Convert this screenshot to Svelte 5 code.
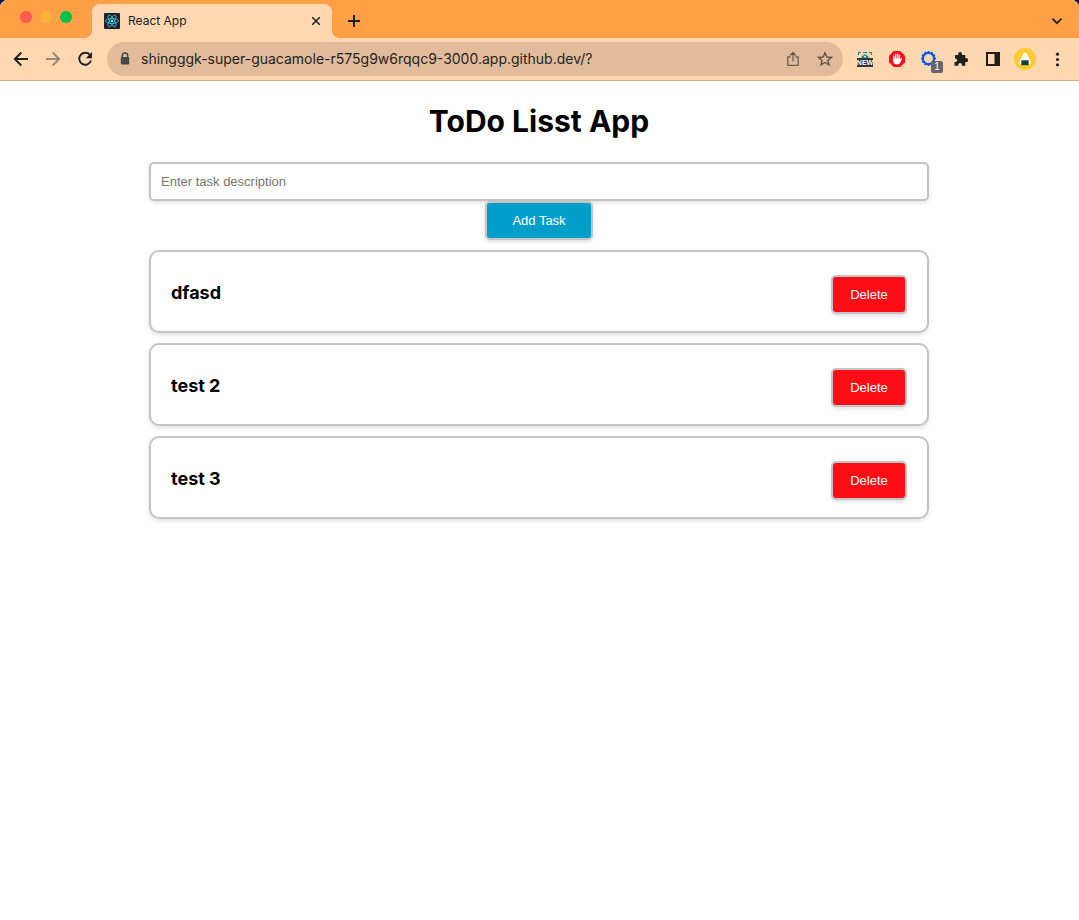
<script>
  let tasks = $state(['dfasd', 'test 2', 'test 3']);
  let draft = $state('');
  let address = $state('shingggk-super-guacamole-r575g9w6rqqc9-3000.app.github.dev/?');

  function addTask(event) {
    event.preventDefault();
    if (!draft.trim()) return;
    tasks.push(draft.trim());
    draft = '';
  }

  function removeTask(index) {
    tasks.splice(index, 1);
  }

  const teeth = Array.from({ length: 12 }, (_, i) => i * 30);
</script>

<div class="window">
  <header>
    <div class="tabs">
      <div class="lights">
        <span class="light close"></span>
        <span class="light minimise"></span>
        <span class="light zoom"></span>
      </div>
      <div class="tab">
        <svg class="favicon" width="16" height="16" viewBox="0 0 16 16" aria-hidden="true">
          <rect width="16" height="16" rx="1" fill="#20232a" />
          <g fill="none" stroke="#3fc1dc" stroke-width=".8">
            <ellipse cx="8" cy="8" rx="6.6" ry="2.5" />
            <ellipse cx="8" cy="8" rx="6.6" ry="2.5" transform="rotate(60 8 8)" />
            <ellipse cx="8" cy="8" rx="6.6" ry="2.5" transform="rotate(120 8 8)" />
          </g>
          <circle cx="8" cy="8" r="1.4" fill="#61dafb" />
        </svg>
        <span class="title">React App</span>
        <button class="icon" aria-label="Close tab">
          <svg width="16" height="16" viewBox="0 0 16 16"><path d="M4.200 4.200l7.600 7.600M11.800 4.200l-7.600 7.600" fill="none" stroke="#1f1f1f" stroke-width="1.500" /></svg>
        </button>
      </div>
      <button class="icon new-tab" aria-label="New tab">
        <svg width="16" height="16" viewBox="0 0 16 16"><path d="M8 2v12M2 8h12" fill="none" stroke="#1f1f1f" stroke-width="2" /></svg>
      </button>
      <button class="icon search" aria-label="Search tabs">
        <svg width="16" height="16" viewBox="0 0 16 16"><path d="M3.500 5.700L8 10.200l4.500-4.500" fill="none" stroke="#1f1f1f" stroke-width="1.700" /></svg>
      </button>
    </div>

    <div class="toolbar">
      <nav>
        <button class="icon" aria-label="Back">
          <svg width="16" height="16" viewBox="0 0 16 16"><path d="M15 8H2M8.300 1.500L1.800 8l6.500 6.500" fill="none" stroke="#1f1f1f" stroke-width="1.900" /></svg>
        </button>
        <button class="icon" aria-label="Forward">
          <svg width="16" height="16" viewBox="0 0 16 16"><path d="M1 8h13M7.700 1.500L14.200 8l-6.500 6.500" fill="none" stroke="#9d8671" stroke-width="1.900" /></svg>
        </button>
        <button class="icon" aria-label="Reload">
          <svg width="16" height="16" viewBox="0 0 16 16"><path d="M13.200 4.300A6 6 0 1 0 14 9.500" fill="none" stroke="#1f1f1f" stroke-width="1.900" /><path d="M15 1v6.200H8.800z" fill="#1f1f1f" /></svg>
        </button>
      </nav>

      <div class="address">
        <svg width="16" height="16" viewBox="0 0 16 16" aria-hidden="true"><path d="M5.300 7V4.700a2.700 2.700 0 0 1 5.400 0V7" fill="none" stroke="#46474a" stroke-width="1.400" /><rect x="3.800" y="6" width="8.400" height="7.500" rx="1" fill="#46474a" /></svg>
        <input aria-label="Address" spellcheck="false" bind:value={address} />
        <button class="icon" aria-label="Share">
          <svg width="16" height="16" viewBox="0 0 16 16"><path d="M5.500 6H2.800v8.300h10.400V6h-2.700M8 10.500V1.700M5 4.500l3-3 3 3" fill="none" stroke="#6b5e52" stroke-width="1.300" /></svg>
        </button>
        <button class="icon" aria-label="Bookmark">
          <svg width="16" height="16" viewBox="0 0 16 16"><path d="M8 1.800l1.800 4.200 4.600.4-3.500 3 1.100 4.500L8 11.500l-4 2.400 1.100-4.500-3.500-3 4.600-.4z" fill="none" stroke="#5e5349" stroke-width="1.400" /></svg>
        </button>
      </div>

      <div class="extensions">
        <button class="icon" aria-label="Capture">
          <svg width="16" height="16" viewBox="0 0 16 16">
            <path d="M1.500 4V1.500H4M6 1.500h4M12 1.500h2.500V4" fill="none" stroke="#168c94" stroke-width="1.200" />
            <path d="M4.500 7V5.500L6 4.500l1-1h2l1 1 1.500 1V7z" fill="#168c94" /><circle cx="8" cy="5.800" r="1" fill="#ffd8b1" />
            <rect y="7" width="16" height="9" fill="#333" />
            <text x="8" y="14" text-anchor="middle" font-size="7" font-weight="700" fill="#fff">NEW</text>
          </svg>
        </button>
        <button class="icon" aria-label="Content blocker">
          <svg width="16" height="16" viewBox="0 0 16 16">
            <path d="M4.700 0h6.600L16 4.700v6.600L11.300 16H4.700L0 11.300V4.700z" fill="#fb0d1b" />
            <path d="M4.800 9V4.800M6.700 8V3.400M8.600 8V3M10.500 9V4.200" stroke="#fff" stroke-width="1.300" stroke-linecap="round" />
            <path d="M4.200 7.400h6.900v1.400l1-1.300c.5-.6 1.300-.2 1 .6l-2.200 4c-.6 1-1.400 1.300-2.700 1.300-2.500 0-4-1.200-4-4z" fill="#fff" />
          </svg>
        </button>
        <button class="icon badged" aria-label="Gear extension, 1 notice">
          <svg width="16" height="16" viewBox="0 0 16 16">
            <circle cx="7.500" cy="7.500" r="5.600" fill="none" stroke="#0b57f0" stroke-width="2.200" />
            {#each teeth as angle}
              <rect x="6.600" y="0" width="1.800" height="2.200" fill="#0b57f0" transform={`rotate(${angle} 7.500 7.500)`} />
            {/each}
          </svg>
          <span class="badge">1</span>
        </button>
        <button class="icon" aria-label="Extensions">
          <svg width="16" height="16" viewBox="0 0 16 16"><path d="M2 4h3.200V2.800a1.900 1.900 0 0 1 3.800 0V4h3.300v3.300h1a1.900 1.900 0 0 1 0 3.800h-1v3.700H8.900v-.9a1.800 1.800 0 0 0-3.600 0v.9H1.500v-3.700h.9a1.800 1.800 0 0 0 0-3.600H2z" fill="#1f1f1f" /></svg>
        </button>
        <button class="icon" aria-label="Side panel">
          <svg width="16" height="16" viewBox="0 0 16 16"><path d="M1 1h14v14H1zM3 3v10h6.500V3z" fill="#1f1f1f" fill-rule="evenodd" /></svg>
        </button>
        <button class="icon profile" aria-label="Profile">
          <svg width="22" height="22" viewBox="0 0 22 22">
            <circle cx="11" cy="11" r="11" fill="#fdcb2f" />
            <path d="M9.500 5.300q1.500-1.500 3 0l4 8.200q.8 2.500-1.500 3H7q-2.300-.5-1.500-3z" fill="#fff" />
            <path d="M7.300 12.300h7.400v5H7.300z" fill="#064a3f" />
          </svg>
        </button>
        <button class="icon" aria-label="Menu">
          <svg width="16" height="16" viewBox="0 0 16 16" fill="#1f1f1f"><circle cx="8.500" cy="3.200" r="1.600" /><circle cx="8.500" cy="8.500" r="1.600" /><circle cx="8.500" cy="13.800" r="1.600" /></svg>
        </button>
      </div>
    </div>
  </header>

  <main>
    <h1>ToDo Lisst App</h1>
    <form onsubmit={addTask}>
      <input aria-label="Task description" placeholder="Enter task description" bind:value={draft} />
      <button class="action add">Add Task</button>
    </form>
    <ul>
      {#each tasks as task, index}
        <li>
          <h3>{task}</h3>
          <button class="action delete" onclick={() => removeTask(index)}>Delete</button>
        </li>
      {/each}
    </ul>
  </main>
</div>

<style>
  :global(body) {
    background: #00145a;
  }

  .window {
    min-height: 100vh;
    overflow: hidden;
    border-radius: 8px 8px 0 0;
    background: #fff;
    font-family: Inter, "Liberation Sans", sans-serif;
    color: #000;
  }

  .window * {
    box-sizing: border-box;
  }

  svg {
    display: block;
    flex: none;
  }

  .icon {
    display: grid;
    place-items: center;
    flex: none;
    width: 16px;
    height: 24px;
    padding: 0;
    border: 0;
    background: none;
  }

  header {
    border-bottom: 1px solid #d0aa8b;
    background: #ffd8b1;
  }

  .tabs {
    display: flex;
    height: 38px;
    background: #ffa047;
  }

  .lights {
    display: flex;
    gap: 8px;
    width: 92px;
    padding: 11px 20px;
  }

  .light {
    width: 12px;
    height: 12px;
    border-radius: 50%;
  }

  .close {
    background: #ff5a52;
  }

  .minimise {
    background: #ffb13c;
  }

  .zoom {
    background: #00c148;
  }

  .tab {
    position: relative;
    display: flex;
    align-items: center;
    gap: 8px;
    width: 240px;
    height: 34px;
    margin-top: 4px;
    padding: 0 8px 0 12px;
    border-radius: 8px 8px 0 0;
    background: #ffd8b1;
  }

  .tab::before,
  .tab::after {
    content: "";
    position: absolute;
    bottom: 0;
    width: 8px;
    height: 8px;
  }

  .tab::before {
    right: 100%;
    background: radial-gradient(circle at 0 0, transparent 8px, #ffd8b1 8px);
  }

  .tab::after {
    left: 100%;
    background: radial-gradient(circle at 100% 0, transparent 8px, #ffd8b1 8px);
  }

  .title {
    flex: 1;
    font-size: 12px;
    line-height: 16px;
    color: #1f1f1f;
  }

  .new-tab {
    margin: 9px 14px;
  }

  .search {
    margin: 9px 14px 0 auto;
  }

  .toolbar {
    display: flex;
    align-items: center;
    height: 42px;
    padding: 0 14px 0 13px;
  }

  nav {
    display: flex;
    gap: 16px;
    margin-right: 14px;
  }

  .address {
    display: flex;
    flex: 1;
    align-items: center;
    gap: 16px;
    height: 34px;
    min-width: 0;
    padding: 0 10px;
    border-radius: 17px;
    background: #e2bc9a;
  }

  .address input {
    flex: 1;
    min-width: 0;
    margin-left: -8px;
    padding: 0;
    border: 0;
    outline: 0;
    background: none;
    font: 14px/20px Inter, "Liberation Sans", sans-serif;
    color: #1f1f1f;
  }

  .extensions {
    display: flex;
    gap: 16px;
    margin-left: 14px;
  }

  .extensions text {
    font-family: "Liberation Sans", sans-serif;
  }

  .badged {
    position: relative;
  }

  .badge {
    position: absolute;
    top: 14px;
    left: 10px;
    width: 12px;
    height: 12px;
    border-radius: 2px;
    background: #666;
    font-size: 10px;
    line-height: 12px;
    text-align: center;
    color: #fff;
  }

  .profile svg {
    margin: 0 -3px;
  }

  main {
    max-width: 781px;
    margin: 0 auto;
    padding: 21px 1px 21px 0;
  }

  h1 {
    margin: 0 0 21px;
    font-size: 30px;
    font-weight: 700;
    line-height: 39px;
    text-align: center;
  }

  form {
    display: flex;
    flex-direction: column;
    align-items: center;
  }

  form input,
  .action {
    height: 39px;
    border: 2px solid #c4c4c4;
    border-radius: 5px;
    box-shadow: 0 2px 4px rgba(0, 0, 0, 0.12);
    font: 13px/15px "Liberation Sans", sans-serif;
  }

  form input {
    width: 100%;
    padding: 0 10px;
    background: #fff;
  }

  form input::placeholder {
    color: #757575;
  }

  .action {
    padding: 0;
    color: #fff;
  }

  .add {
    width: 108px;
    background: #009fc9;
  }

  .delete {
    width: 76px;
    background: #ff0d17;
  }

  ul {
    display: grid;
    gap: 10px;
    margin: 10px 0 0;
    padding: 0;
    list-style: none;
  }

  li {
    display: flex;
    justify-content: space-between;
    padding: 23px 20px 17px;
    border: 2px solid #c4c4c4;
    border-radius: 10px;
    box-shadow: 0 2px 4px rgba(0, 0, 0, 0.12);
  }

  h3 {
    margin: 0;
    font-size: 18px;
    font-weight: 700;
    line-height: 36px;
  }
</style>
